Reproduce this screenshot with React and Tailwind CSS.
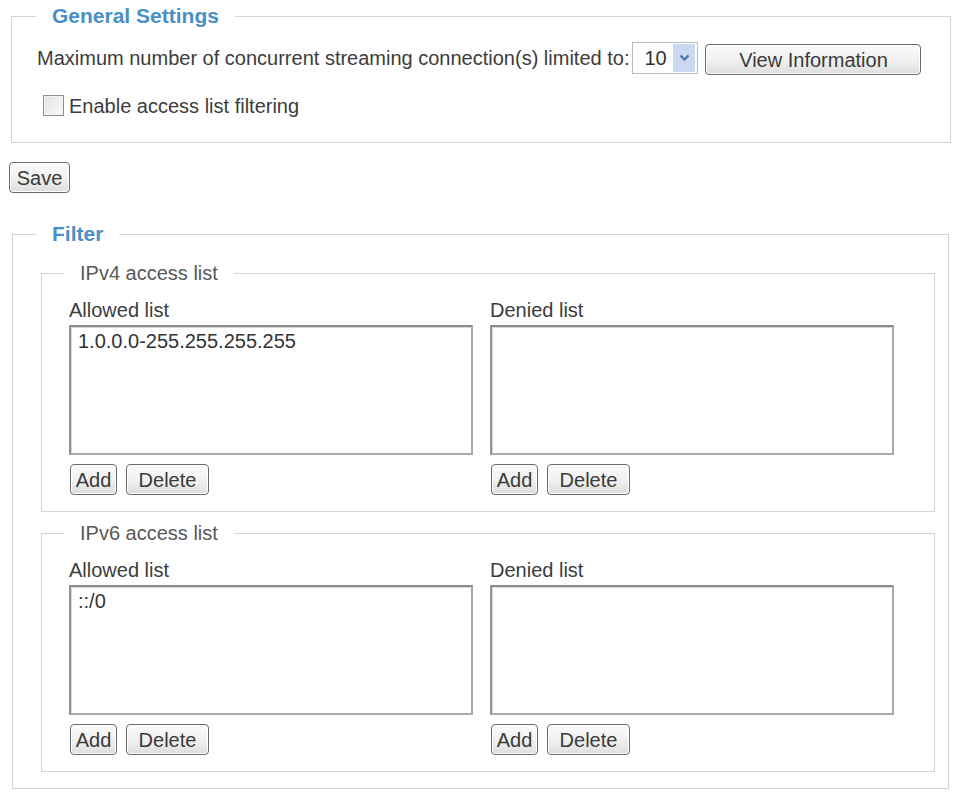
import React from "react";

function Btn({ children, className = "" }) {
  return (
    <button
      type="button"
      className={
        "flex items-center justify-center h-[31px] border border-[#636c70] rounded-[4px] bg-gradient-to-b from-[#fbfbfb] via-[#f1f1f1] to-[#dedede] text-[20px] leading-none text-[#3a3a3a] shadow-[inset_0_0_0_1px_#ffffff] " +
        className
      }
    >
      {children}
    </button>
  );
}

function ListBox({ items }) {
  return (
    <div className="w-[404px] h-[130px] border-2 border-[#a9a9a9] border-t-[#8c8c8c] border-l-[#939393] bg-white shadow-[inset_1px_1px_0_#d6d6d6] pl-[7px] pt-[3px] text-[20px] leading-[22px] text-[#333]">
      {items.map((it) => (
        <div key={it}>{it}</div>
      ))}
    </div>
  );
}

function ListColumn({ label, items }) {
  return (
    <div className="flex flex-col">
      <div className="h-[22px] leading-[22px] text-[20px] text-[#3c3c3c]">{label}</div>
      <div className="mt-[4px]">
        <ListBox items={items} />
      </div>
      <div className="mt-[9px] flex gap-[9px] pl-[1px]">
        <Btn className="w-[47px]">Add</Btn>
        <Btn className="w-[83px]">Delete</Btn>
      </div>
    </div>
  );
}

function AccessList({ title, allowed, className = "" }) {
  return (
    <fieldset className={"ml-[28px] w-[894px] border border-[#d4d4d4] " + className}>
      <legend className="ml-[22px] px-[16px] text-[20px] leading-[22px] text-[#585858]">{title}</legend>
      <div className="mt-[15px] pl-[27px] pb-[16px] flex gap-[17px]">
        <ListColumn label="Allowed list" items={allowed} />
        <ListColumn label="Denied list" items={[]} />
      </div>
    </fieldset>
  );
}

export default function App() {
  return (
    <div className="w-[959px] h-[793px] overflow-hidden bg-white font-['Liberation_Sans',Arial,sans-serif] text-[20px] text-[#3c3c3c] pt-[5px]">
      <fieldset className="ml-[11px] w-[940px] border border-[#d4d4d4]">
        <legend className="ml-[24px] px-[16px] text-[21px] font-bold leading-[22px] text-[#4a8fc5]">General Settings</legend>
        <div className="pl-[25px] pb-[26px]">
          <div className="mt-[14px] flex items-center h-[34px]">
            <span className="leading-[22px]">Maximum number of concurrent streaming connection(s) limited to:</span>
            <div className="ml-[3px] flex items-center w-[66px] h-[32px] border border-[#b4bcc4] bg-white">
              <span className="ml-[11px] w-[29px] text-[20px] leading-none text-[#333]">10</span>
              <span className="ml-auto mr-[2px] w-[23px] h-[28px] bg-[#ccd8ef] flex items-center justify-center">
                <svg width="11" height="8" viewBox="0 0 11 8">
                  <path d="M1.5 1.5 L5.5 5.5 L9.5 1.5" fill="none" stroke="#4a6fb5" strokeWidth="2.2" />
                </svg>
              </span>
            </div>
            <Btn className="ml-[7px] mt-[3px] w-[216px]">View Information</Btn>
          </div>
          <div className="mt-[20px] flex items-center h-[21px] pl-[6px]">
            <span className="w-[21px] h-[21px] border border-[#8f8f8f] bg-gradient-to-br from-[#e2e2e2] to-[#fbfbfb] shadow-[inset_0_0_0_1px_#f4f4f4]" />
            <span className="ml-[5px] leading-[22px]">Enable access list filtering</span>
          </div>
        </div>
      </fieldset>

      <div className="mt-[19px] ml-[9px]">
        <Btn className="w-[61px] h-[28px]">Save</Btn>
      </div>

      <fieldset className="mt-[30px] ml-[12px] w-[937px] border border-[#d4d4d4]">
        <legend className="ml-[23px] px-[16px] text-[21px] font-bold leading-[22px] text-[#4a8fc5]">Filter</legend>
        <div className="pb-[16px]">
          <AccessList className="mt-[17px]" title="IPv4 access list" allowed={["1.0.0.0-255.255.255.255"]} />
          <AccessList className="mt-[10px]" title="IPv6 access list" allowed={["::/0"]} />
        </div>
      </fieldset>
    </div>
  );
}
